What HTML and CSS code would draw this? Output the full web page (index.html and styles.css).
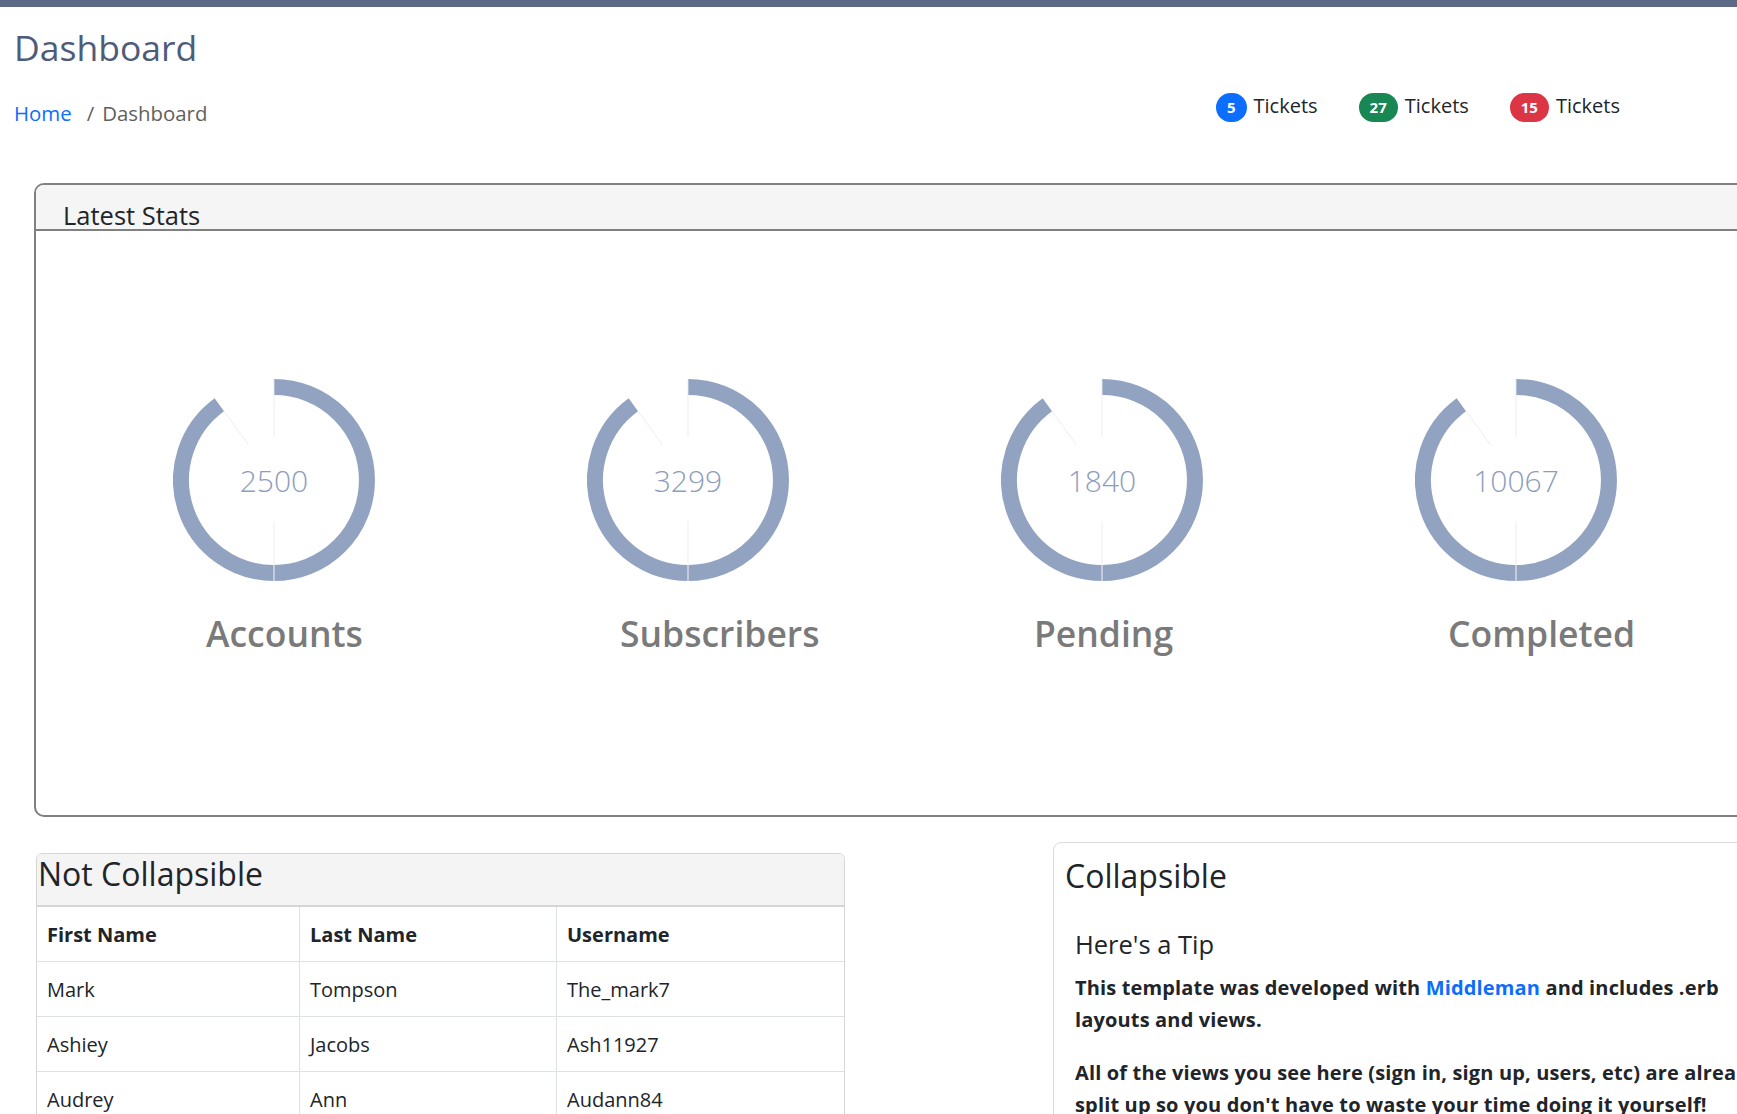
FILE: index.html
```html
<!DOCTYPE html>
<html lang="en">
<head>
<meta charset="utf-8">
<title>Dashboard</title>
<link rel="stylesheet" href="styles.css">
</head>
<body>
<div class="topbar"></div>
<header class="page-head">
  <h1 class="page-title">Dashboard</h1>
  <div class="subbar">
    <nav class="crumbs"><a href="#">Home</a><span class="sep">/</span><span>Dashboard</span></nav>
    <ul class="tickets">
      <li class="ticket"><span class="badge badge-blue">5</span><span>Tickets</span></li>
      <li class="ticket"><span class="badge badge-green">27</span><span>Tickets</span></li>
      <li class="ticket"><span class="badge badge-red">15</span><span>Tickets</span></li>
    </ul>
  </div>
</header>
<main class="content">
  <section class="stats">
    <h2 class="stats-head">Latest Stats</h2>
    <div class="stats-body">
      <div class="stat">
        <svg class="gauge" viewBox="0 0 202 202" width="202" height="202">
          <path class="ring" d="M101 8 A93 93 0 0 1 101 194"/>
          <path class="ring" d="M101 194 A93 93 0 0 1 46.34 25.76"/>
          <line class="seam" x1="101" y1="185" x2="101" y2="202"/>
          <line class="tick" x1="101" y1="0" x2="101" y2="58"/>
          <line class="tick" x1="101" y1="142" x2="101" y2="186"/>
          <line class="tick" x1="75.73" y1="66.21" x2="51.04" y2="32.23"/>
          <text class="gauge-num" x="101" y="113" text-anchor="middle">2500</text>
        </svg>
        <div class="stat-label">Accounts</div>
      </div>
      <div class="stat">
        <svg class="gauge" viewBox="0 0 202 202" width="202" height="202">
          <path class="ring" d="M101 8 A93 93 0 0 1 101 194"/>
          <path class="ring" d="M101 194 A93 93 0 0 1 46.34 25.76"/>
          <line class="seam" x1="101" y1="185" x2="101" y2="202"/>
          <line class="tick" x1="101" y1="0" x2="101" y2="58"/>
          <line class="tick" x1="101" y1="142" x2="101" y2="186"/>
          <line class="tick" x1="75.73" y1="66.21" x2="51.04" y2="32.23"/>
          <text class="gauge-num" x="101" y="113" text-anchor="middle">3299</text>
        </svg>
        <div class="stat-label">Subscribers</div>
      </div>
      <div class="stat">
        <svg class="gauge" viewBox="0 0 202 202" width="202" height="202">
          <path class="ring" d="M101 8 A93 93 0 0 1 101 194"/>
          <path class="ring" d="M101 194 A93 93 0 0 1 46.34 25.76"/>
          <line class="seam" x1="101" y1="185" x2="101" y2="202"/>
          <line class="tick" x1="101" y1="0" x2="101" y2="58"/>
          <line class="tick" x1="101" y1="142" x2="101" y2="186"/>
          <line class="tick" x1="75.73" y1="66.21" x2="51.04" y2="32.23"/>
          <text class="gauge-num" x="101" y="113" text-anchor="middle">1840</text>
        </svg>
        <div class="stat-label">Pending</div>
      </div>
      <div class="stat">
        <svg class="gauge" viewBox="0 0 202 202" width="202" height="202">
          <path class="ring" d="M101 8 A93 93 0 0 1 101 194"/>
          <path class="ring" d="M101 194 A93 93 0 0 1 46.34 25.76"/>
          <line class="seam" x1="101" y1="185" x2="101" y2="202"/>
          <line class="tick" x1="101" y1="0" x2="101" y2="58"/>
          <line class="tick" x1="101" y1="142" x2="101" y2="186"/>
          <line class="tick" x1="75.73" y1="66.21" x2="51.04" y2="32.23"/>
          <text class="gauge-num" x="101" y="113" text-anchor="middle">10067</text>
        </svg>
        <div class="stat-label">Completed</div>
      </div>
    </div>
  </section>

  <div class="row">
    <section class="card-plain">
      <h2 class="plain-head">Not Collapsible</h2>
      <table class="table">
        <colgroup><col class="c1"><col class="c2"><col class="c3"></colgroup>
        <thead>
          <tr><th>First Name</th><th>Last Name</th><th>Username</th></tr>
        </thead>
        <tbody>
          <tr><td>Mark</td><td>Tompson</td><td>The_mark7</td></tr>
          <tr><td>Ashiey</td><td>Jacobs</td><td>Ash11927</td></tr>
          <tr><td>Audrey</td><td>Ann</td><td>Audann84</td></tr>
        </tbody>
      </table>
    </section>

    <section class="card-collapse">
      <h2 class="collapse-title">Collapsible</h2>
      <div class="collapse-body">
        <h4 class="tip-title">Here's a Tip</h4>
        <p>This template was developed with <a href="#">Middleman</a> and includes .erb layouts and views.</p>
        <p>All of the views you see here (sign in, sign up, users, etc) are already split up so you don't have to waste your time doing it yourself!</p>
      </div>
    </section>
  </div>
</main>
</body>
</html>
```

FILE: styles.css
```css
* { box-sizing: border-box; }

html { overflow: hidden; }

body {
  margin: 0;
  font-family: "Open Sans", "Noto Sans", sans-serif;
  color: #212529;
  background: #fff;
}

.topbar {
  height: 7px;
  background: #5c6a88;
}

.page-head {
  padding: 0 117px 0 14px;
}

.page-title {
  margin: 19px 0 0;
  font-size: 35.5px;
  line-height: 42px;
  font-weight: 400;
  color: #4e5c7a;
}

.subbar {
  display: flex;
  justify-content: space-between;
  align-items: flex-start;
  margin-top: 21px;
}

.crumbs {
  display: flex;
  padding-top: 9px;
  font-size: 20.4px;
  line-height: 30px;
  color: #5f5f5f;
}

.crumbs a {
  color: #0d6efd;
  text-decoration: none;
}

.crumbs .sep {
  padding: 0 8px 0 15px;
}

.tickets {
  display: flex;
  gap: 41px;
  margin: 0;
  padding: 0;
  list-style: none;
  font-size: 20px;
  line-height: 30px;
}

.ticket {
  display: flex;
  align-items: center;
  gap: 7px;
}

.badge {
  display: inline-block;
  height: 29px;
  margin-top: 4px;
  padding: 0 11px;
  border-radius: 15px;
  font-size: 15px;
  line-height: 29px;
  font-weight: 700;
  color: #fff;
}

.badge-blue { background: #0d6efd; }
.badge-green { background: #198754; }
.badge-red { background: #dc3545; }

.content {
  padding-left: 34px;
}

.stats {
  width: 1724px;
  margin-top: 55px;
  border: 2px solid #808080;
  border-radius: 10px;
  overflow: hidden;
}

.stats-head {
  margin: 0;
  padding: 17px 27px 0;
  background: #f5f5f5;
  border-bottom: 2px solid #808080;
  font-size: 25.5px;
  line-height: 27px;
  font-weight: 500;
}

.stats-body {
  display: grid;
  grid-template-columns: repeat(4, 414px);
  padding: 148px 0 158px 31px;
}

.stat {
  display: flex;
  flex-direction: column;
}

.gauge {
  display: block;
  width: 202px;
  height: 202px;
  margin-left: 106px;
}

.ring {
  fill: none;
  stroke: #92a3c1;
  stroke-width: 16;
}

.seam {
  stroke: #ffffff;
  stroke-width: 0.9;
}

.tick {
  stroke: #e6e8ec;
  stroke-width: 0.8;
}

.gauge-num {
  font-family: "Open Sans", "Noto Sans", sans-serif;
  font-size: 30px;
  font-weight: 300;
  fill: #8c9dbd;
}

.stat-label {
  margin: 28px 0 0 139px;
  font-size: 35.5px;
  line-height: 48px;
  font-weight: 600;
  color: #7a7a7a;
}

.row {
  display: flex;
  align-items: flex-start;
  gap: 208px;
  margin-top: 25px;
}

.card-plain {
  flex: none;
  width: 809px;
  margin: 11px 0 0 2px;
  border: 1px solid #d6d6d6;
  border-radius: 6px;
  overflow: hidden;
}

.plain-head {
  margin: 0;
  padding: 0 0 11px 1px;
  background: #f4f4f4;
  border-bottom: 2px solid #d6d6d6;
  font-size: 32px;
  line-height: 40px;
  font-weight: 500;
}

.table {
  width: 100%;
  table-layout: fixed;
  border-collapse: separate;
  border-spacing: 0;
  font-size: 20px;
  line-height: 30px;
}

.c1 { width: 263px; }
.c2 { width: 257px; }

.table th,
.table td {
  padding: 13px 10px 11px;
  text-align: left;
  border-bottom: 1px solid #dee2e6;
  border-right: 1px solid #dee2e6;
}

.table th { font-weight: 700; }

.table th:last-child,
.table td:last-child {
  border-right: none;
}

.card-collapse {
  flex: none;
  width: 744px;
  padding: 13px 11px 0;
  border: 1px solid #dadada;
  border-radius: 8px;
}

.collapse-title {
  margin: 0;
  font-size: 32px;
  line-height: 40px;
  font-weight: 500;
}

.collapse-body {
  padding: 0 10px;
}

.tip-title {
  margin: 30px 0 0;
  font-size: 25.5px;
  line-height: 36px;
  font-weight: 500;
}

.collapse-body p {
  margin: 10px 0 0;
  font-size: 20px;
  line-height: 32px;
  font-weight: 700;
  letter-spacing: 0.15px;
}

.collapse-body p + p {
  margin-top: 21px;
}

.collapse-body a {
  color: #0d6efd;
  text-decoration: none;
}
```
